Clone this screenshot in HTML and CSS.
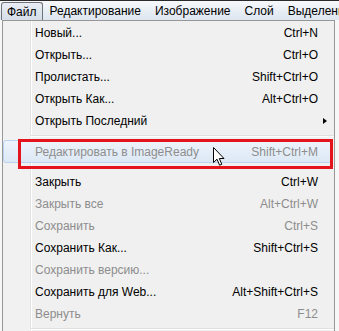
FILE: index.html
```html
<!DOCTYPE html>
<html lang="ru">
<head>
<meta charset="utf-8">
<link rel="stylesheet" href="styles.css">
</head>
<body>
<div class="menubar">
  <span class="mb-item active">Файл</span>
  <span class="mb-item">Редактирование</span>
  <span class="mb-item">Изображение</span>
  <span class="mb-item">Слой</span>
  <span class="mb-item">Выделение</span>
</div>
<div class="dropdown">
  <div class="item"><span class="label">Новый...</span><span class="key">Ctrl+N</span><span class="arrow"></span></div>
  <div class="item"><span class="label">Открыть...</span><span class="key">Ctrl+O</span><span class="arrow"></span></div>
  <div class="item"><span class="label">Пролистать...</span><span class="key">Shift+Ctrl+O</span><span class="arrow"></span></div>
  <div class="item"><span class="label">Открыть Как...</span><span class="key">Alt+Ctrl+O</span><span class="arrow"></span></div>
  <div class="item"><span class="label">Открыть Последний</span><span class="key"></span><span class="arrow sub"></span></div>
  <div class="sep"></div>
  <div class="item disabled hover"><span class="label">Редактировать в ImageReady</span><span class="key">Shift+Ctrl+M</span><span class="arrow"></span></div>
  <div class="sep"></div>
  <div class="item"><span class="label">Закрыть</span><span class="key">Ctrl+W</span><span class="arrow"></span></div>
  <div class="item disabled"><span class="label">Закрыть все</span><span class="key">Alt+Ctrl+W</span><span class="arrow"></span></div>
  <div class="item disabled"><span class="label">Сохранить</span><span class="key">Ctrl+S</span><span class="arrow"></span></div>
  <div class="item"><span class="label">Сохранить Как...</span><span class="key">Shift+Ctrl+S</span><span class="arrow"></span></div>
  <div class="item disabled"><span class="label">Сохранить версию...</span><span class="key"></span><span class="arrow"></span></div>
  <div class="item"><span class="label">Сохранить для Web...</span><span class="key">Alt+Shift+Ctrl+S</span><span class="arrow"></span></div>
  <div class="item disabled"><span class="label">Вернуть</span><span class="key">F12</span><span class="arrow"></span></div>
  <div class="sep"></div>
  <div class="highlight-box"></div>
  <svg class="cursor" width="13" height="19" viewBox="0 0 13 19">
    <path d="M0.5 0.5 L0.5 15.5 L4 12.2 L6.6 18.2 L8.8 17.3 L6.3 11.5 L11 11.5 Z" fill="#fff" stroke="#000" stroke-width="1" stroke-linejoin="miter"/>
  </svg>
</div>
</body>
</html>
```

FILE: styles.css
```css
html, body {
  margin: 0;
  padding: 0;
  background: #f7f7f7;
  width: 339px;
  height: 331px;
  overflow: hidden;
  font-family: "Liberation Sans", Arial, sans-serif;
  font-size: 12px;
}

.menubar {
  height: 19px;
  border-top: 1px solid #2a2a2a;
  background: linear-gradient(#f7f9fc, #dde5ef);
  display: flex;
  align-items: stretch;
  white-space: nowrap;
  overflow: hidden;
  color: #000;
}

.mb-item {
  padding: 0 7px;
  display: flex;
  align-items: center;
  line-height: 14px;
}

.mb-item.active {
  margin: 1px 0 0 1px;
  padding: 0 5px;
  border: 1px solid #6f7378;
  border-bottom: none;
  border-radius: 3px 3px 0 0;
  background: linear-gradient(#e9eef5, #d5dde8);
}

.dropdown {
  position: relative;
  margin-left: 2px;
  width: 331px;
  height: 310px;
  border: 1px solid #979797;
  border-bottom: none;
  padding-top: 1px;
  background: linear-gradient(to right, #f1f1f1 27px, #e2e3e3 27px 28px, #ffffff 28px 29px, #f0f0f0 29px);
  color: #000;
}

.item {
  height: 22px;
  display: flex;
  align-items: center;
  padding-left: 32px;
  padding-right: 7px;
  white-space: nowrap;
}

.label {
  flex: 1;
}

.key {
  text-align: right;
}

.arrow {
  width: 9px;
  height: 22px;
  display: flex;
  align-items: center;
  justify-content: flex-end;
}

.arrow.sub::after {
  content: "";
  width: 0;
  height: 0;
  border-top: 3.5px solid transparent;
  border-bottom: 3.5px solid transparent;
  border-left: 4px solid #000;
}

.disabled {
  color: #8d8d8d;
}

.item.hover {
  height: 21px;
  margin-right: 2px;
  padding-left: 31px;
  padding-right: 4px;
  border: 1px solid #b8d2ef;
  border-radius: 3px;
  background: linear-gradient(#eef4fb, #dce8f5);
}

.sep {
  height: 8px;
  margin-left: 27px;
  display: flex;
  flex-direction: column;
  justify-content: center;
}

.sep::before {
  content: "";
  height: 1px;
  background: #e0e0e0;
  border-bottom: 1px solid #ffffff;
}

.highlight-box {
  position: absolute;
  left: 15px;
  top: 118px;
  width: 309px;
  height: 24px;
  border: 3px solid #e3141b;
}

.cursor {
  position: absolute;
  left: 210px;
  top: 126px;
}
```
